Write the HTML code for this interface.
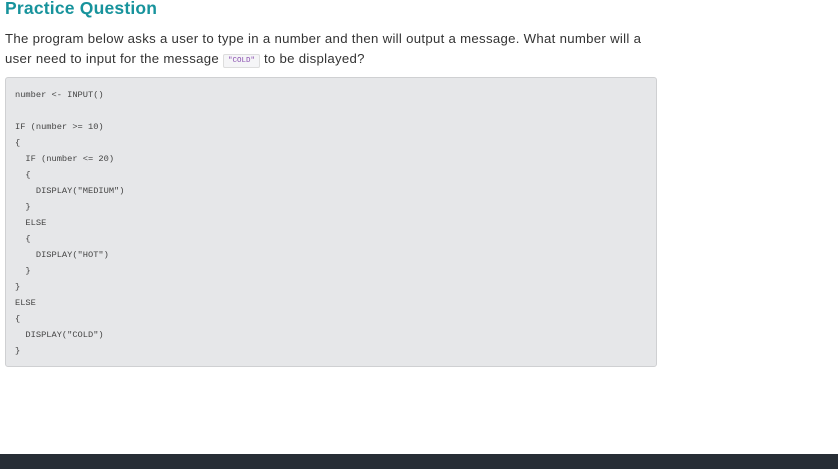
<!DOCTYPE html>
<html><head><meta charset="utf-8"><style>
html,body{margin:0;padding:0;background:#fff;width:838px;height:469px;overflow:hidden;position:relative}
h1{position:absolute;left:5px;top:-2px;margin:0;font:bold 17.5px "Liberation Sans",sans-serif;color:#17939c;letter-spacing:0.2px}
p{position:absolute;left:5px;top:29px;margin:0;width:700px;font:13.2px/20px "Liberation Sans",sans-serif;color:#333;white-space:nowrap;letter-spacing:0.3px}
code.i{font:7.5px "Liberation Mono",monospace;color:#8a4fb0;background:#f5f5f7;border:1px solid #ddd;border-radius:2px;padding:2px 4px;position:relative;top:-1px;letter-spacing:0}
.box{position:absolute;left:5px;top:77px;width:650px;height:288px;background:#e6e7e9;border:1px solid #cfd0d2;border-radius:3px}
pre{margin:0;position:absolute;left:9px;top:9px;font:8.7px/16px "Liberation Mono",monospace;color:#444}
.foot{position:absolute;left:0;top:454px;width:838px;height:15px;background:#272d35}
</style></head><body>
<h1>Practice Question</h1>
<p>The program below asks a user to type in a number and then will output a message. What number will a<br>user need to input for the message <code class="i">"COLD"</code> to be displayed?</p>
<div class="box"><pre>number &lt;- INPUT()

IF (number &gt;= 10)
{
  IF (number &lt;= 20)
  {
    DISPLAY("MEDIUM")
  }
  ELSE
  {
    DISPLAY("HOT")
  }
}
ELSE
{
  DISPLAY("COLD")
}</pre></div>
<div class="foot"></div>
</body></html>
